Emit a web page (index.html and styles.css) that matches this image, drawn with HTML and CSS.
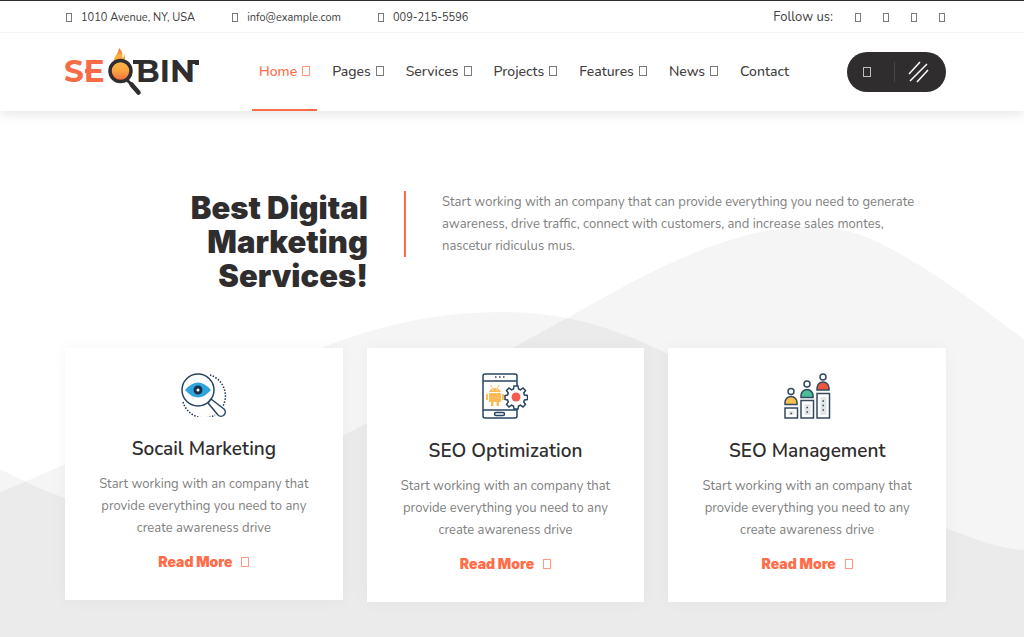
FILE: index.html
```
<!DOCTYPE html>
<html lang="en">
<head>
    <meta charset="UTF-8">
    <meta name="viewport" content="width=device-width, initial-scale=1.0">
    <title>Seobin</title>
    <link rel="stylesheet" href="styles.css">
</head>
<body>
    <header class="header">
        <div class="top-bar">
            <ul class="contact-list">
                <li><span class="glyph small"></span>1010 Avenue, NY, USA</li>
                <li><span class="glyph small"></span><a href="mailto:info@example.com">info@example.com</a></li>
                <li><span class="glyph small"></span><a href="tel:0092155596">009-215-5596</a></li>
            </ul>
            <div class="follow">
                <span class="follow-title">Follow us:</span>
                <a href="#" aria-label="Facebook"><span class="glyph small"></span></a>
                <a href="#" aria-label="Twitter"><span class="glyph small"></span></a>
                <a href="#" aria-label="Instagram"><span class="glyph small"></span></a>
                <a href="#" aria-label="LinkedIn"><span class="glyph small"></span></a>
            </div>
        </div>
        <div class="main-bar">
            <a href="#" class="logo" aria-label="Seobin">
                <svg width="136" height="50" viewBox="0 0 136 50">
                    <defs>
                        <linearGradient id="fire" x1="0" y1="0" x2="0" y2="1">
                            <stop offset="0" stop-color="#f0643c"/>
                            <stop offset="0.5" stop-color="#fbb040"/>
                            <stop offset="1" stop-color="#f9a13c"/>
                        </linearGradient>
                        <linearGradient id="lens" x1="0" y1="0" x2="0" y2="1">
                            <stop offset="0" stop-color="#fcb84a"/>
                            <stop offset="0.5" stop-color="#fba23f"/>
                            <stop offset="1" stop-color="#f2663f"/>
                        </linearGradient>
                    </defs>
                    <text class="logo-text orange" x="-1" y="35">SE</text>
                    <path d="M20 24h5" stroke="#f86b47" stroke-width="4"/>
                    <text class="logo-text" x="71" y="35">BIN</text>
                    <path d="M68 15h7M126 15h6v3" fill="none" stroke="#2f2d2e" stroke-width="4"/>
                    <path d="M49 15c-1-5 4-7 5-14 4 4 4 7 3 10 2-1 2-2 2-4 2 3 1 6 0 9z" fill="url(#fire)"/>
                    <circle cx="55.500" cy="24" r="10.500" fill="url(#lens)" stroke="#2f2d2e" stroke-width="3.500"/>
                    <path d="M62 33l4 4" stroke="#2f2d2e" stroke-width="3"/>
                    <path d="M66.500 37.500l7 8" stroke="#2f2d2e" stroke-width="4.500" stroke-linecap="round"/>
                </svg>
            </a>
            <nav class="nav">
                <a href="#" class="active">Home<span class="glyph"></span></a>
                <a href="#">Pages<span class="glyph"></span></a>
                <a href="#">Services<span class="glyph"></span></a>
                <a href="#">Projects<span class="glyph"></span></a>
                <a href="#">Features<span class="glyph"></span></a>
                <a href="#">News<span class="glyph"></span></a>
                <a href="#">Contact</a>
            </nav>
            <div class="tools">
                <button class="tool search" type="button" aria-label="Search"><span class="glyph"></span></button>
                <button class="tool menu" type="button" aria-label="Menu">
                    <svg width="22" height="22" viewBox="0 0 22 22">
                        <path d="M1 13L12 1M2 20L19 3M9 21L20 9" fill="none" stroke="#fff" stroke-width="1.500"/>
                    </svg>
                </button>
            </div>
        </div>
    </header>

    <main class="services">
        <svg class="hills" viewBox="0 0 1024 526" preserveAspectRatio="none" aria-hidden="true">
            <path d="M0 381C90 345 190 292 300 246C370 215 435 201 500 201C580 201 630 225 668 243C770 300 850 405 946 417C980 430 1002 438 1024 439V526H0Z"/>
            <path d="M0 358C40 378 80 398 125 398C240 395 380 300 512 237C600 191 700 123 790 117C845 112 870 126 904 145C950 171 985 200 1024 228V526H0Z"/>
        </svg>
        <section class="intro">
            <h1>Best Digital Marketing Services!</h1>
            <p>Start working with an company that can provide everything you need to generate awareness, drive traffic, connect with customers, and increase sales montes, nascetur ridiculus mus.</p>
        </section>
        <section class="cards">
            <article class="card">
                <svg width="46" height="44" viewBox="0 0 46 44" fill="none">
                    <path d="M29 2A22 22 0 0 1 42 33M2 29A22 22 0 0 0 34 42" stroke="#203a57" stroke-width="1.500" stroke-dasharray="1.500 1.500"/>
                    <circle cx="17" cy="17" r="16" stroke="#264461" stroke-width="1.500"/>
                    <path d="M4 17Q17 2 30 17Q17 32 4 17Z" fill="#2fa3dc"/>
                    <circle cx="17" cy="17" r="3" fill="#fff" stroke="#172f4b" stroke-width="3"/>
                    <path d="M27 30L30 26L43 36A4 4 0 0 1 37 42Z" fill="#fff" stroke="#264461" stroke-width="1.500" stroke-linejoin="round"/>
                </svg>
                <h2>Socail Marketing</h2>
                <p>Start working with an company that provide everything you need to any create awareness drive</p>
                <a href="#" class="more">Read More<span class="glyph"></span></a>
            </article>
            <article class="card">
                <svg width="46" height="46" viewBox="0 0 46 46" fill="none">
                    <rect x="1" y="1" width="34" height="44" rx="2" stroke="#264461" stroke-width="1.500"/>
                    <path d="M1 8h34M1 37h34" stroke="#264461" stroke-width="1.500"/>
                    <path d="M13 4h1.500M17 4h1.500M21 4h1.500" stroke="#264461" stroke-width="1.500"/>
                    <rect x="12.500" y="39.500" width="10" height="3" rx="1.500" stroke="#264461" stroke-width="1.500"/>
                    <path d="M7 19a6.500 6.500 0 0 1 12 0zM7 20h12v9h-2v4h-2.500v-4h-3v4H9v-4H7zM4 21h2v6H4zM20 21h2v6h-2z" fill="#fdbb58"/>
                    <path d="M9 12l1.500 3M17 12l-1.500 3" stroke="#fdbb58"/>
                    <path d="M10.500 17h1M14.500 17h1" stroke="#fff"/>
                    <path d="M32 13h4l.5 3 2 .8 2.500-1.800 2.500 2.500-1.800 2.500.8 2 3 .5v4l-3 .5-.8 2 1.800 2.500-2.500 2.500-2.500-1.800-2 .8-.5 3h-4l-.5-3-2-.8-2.500 1.800-2.500-2.500 1.800-2.500-.8-2-2.500-.5v-4l2.500-.5.8-2-1.800-2.500 2.500-2.500 2.500 1.800 2-.8z" fill="#fff" stroke="#264461" stroke-width="1.500"/>
                    <circle cx="34" cy="24" r="4.500" fill="#f35b50"/>
                </svg>
                <h2>SEO Optimization</h2>
                <p>Start working with an company that provide everything you need to any create awareness drive</p>
                <a href="#" class="more">Read More<span class="glyph"></span></a>
            </article>
            <article class="card">
                <svg width="47" height="46" viewBox="0 0 47 46" fill="#fff" stroke="#34495e" stroke-width="1.500">
                    <rect x="1" y="35" width="12.500" height="10"/>
                    <rect x="17" y="27.500" width="12.500" height="17.500"/>
                    <rect x="33" y="20.500" width="12.500" height="24.500"/>
                    <path d="M4.500 38h6v4h-6zM20.500 31h6v11h-6zM36.500 24h6v18h-6z" fill="#e1e6e9" stroke="none"/>
                    <path d="M6.500 40.500h1.500M22.500 34.500h1.500M22.500 39h1.500M38.500 28h1.500M38.500 32.500h1.500M38.500 37h1.500"/>
                    <path d="M1 31.500v-2a6 6 0 0 1 12 0v2z" fill="#fbc04f"/>
                    <path d="M17 24.500v-2a6 6 0 0 1 12 0v2z" fill="#4bbd98"/>
                    <path d="M33 17v-2a6 6 0 0 1 12 0v2z" fill="#f0563f"/>
                    <circle cx="7" cy="18.500" r="3"/>
                    <circle cx="23" cy="11" r="3"/>
                    <circle cx="39" cy="4" r="3"/>
                </svg>
                <h2>SEO Management</h2>
                <p>Start working with an company that provide everything you need to any create awareness drive</p>
                <a href="#" class="more">Read More<span class="glyph"></span></a>
            </article>
        </section>
    </main>
</body>
</html>
```
FILE: styles.css
```
* {
    box-sizing: border-box;
}
body {
    margin: 0;
    font-family: Nunito, Lato, sans-serif;
    font-size: 13px;
    color: #404040;
    background: #fff;
}
a {
    color: inherit;
    text-decoration: none;
}
.header {
    position: relative;
    z-index: 1;
    background: #fff;
    border-top: 1px solid #2f2d2e;
    box-shadow: 0 2px 12px rgba(0, 0, 0, 0.12);
}
.top-bar,
.main-bar {
    display: flex;
    align-items: center;
    justify-content: space-between;
    padding: 0 78px 0 65px;
}
.top-bar {
    height: 32px;
    padding-top: 1px;
    border-bottom: 1px solid #f5f5f5;
    font-size: 11px;
}
.contact-list {
    display: flex;
    gap: 36px;
    margin: 0;
    padding: 0;
    list-style: none;
}
.contact-list li {
    display: flex;
    align-items: center;
    gap: 9px;
}
.follow {
    display: flex;
    align-items: center;
    gap: 22px;
    padding-right: 1px;
    font-size: 13px;
}
.follow a {
    display: flex;
}
/* empty icon box */
.glyph {
    display: inline-block;
    width: 8px;
    height: 10px;
    border: 1px solid currentColor;
    opacity: 0.7;
}
.glyph.small {
    width: 6px;
    height: 9px;
}
.contact-list .glyph {
    margin-left: 1px;
}
.main-bar {
    height: 78px;
}
.logo {
    display: flex;
}
.logo-text {
    font-family: Montserrat, Inter, sans-serif;
    font-size: 31px;
    font-weight: 700;
    fill: #2f2d2e;
}
.logo-text.orange {
    fill: #f86b47;
}
.nav {
    display: flex;
    align-self: stretch;
    gap: 8px;
    font-size: 14px;
    font-weight: 500;
}
.nav a {
    display: flex;
    align-items: center;
    gap: 5px;
    padding: 0 7px;
    border-bottom: 2px solid transparent;
}
.nav .active {
    color: #ff6c47;
    border-color: #ff6c47;
}
.tools {
    display: flex;
    align-items: center;
    width: 99px;
    height: 40px;
    padding-right: 3px;
    border-radius: 20px;
    background: #2f2d2e;
}
.tool {
    display: flex;
    flex: 1;
    align-items: center;
    justify-content: center;
    height: 20px;
    padding: 0;
    border: 0;
    background: none;
    color: #fff;
}
.tool.search {
    flex: 0 0 47px;
    padding-right: 6px;
}
.tool.menu {
    border-left: 1px solid #484647;
}
.services {
    position: relative;
    padding: 80px 78px 35px 65px;
}
.hills {
    position: absolute;
    inset: 0;
    width: 100%;
    height: 100%;
    fill: rgba(0, 0, 0, 0.04);
}
.intro {
    position: relative;
    display: flex;
    align-items: flex-start;
    height: 157px;
}
.intro h1 {
    flex: 0 0 303px;
    margin: 0;
    padding-left: 90px;
    font-family: "Arial Black", Inter, sans-serif;
    font-size: 31px;
    font-weight: 900;
    line-height: 34px;
    text-align: right;
    color: #2f2d2e;
}
.intro p {
    margin: 0 0 0 36px;
    padding: 0 24px 0 36px;
    border-left: 2px solid #ff6c47;
}
p {
    font-size: 13px;
    line-height: 22px;
    color: #7f7f7f;
}
.cards {
    position: relative;
    display: grid;
    grid-template-columns: repeat(3, 1fr);
    align-items: start;
    gap: 24px;
}
.card {
    display: flex;
    flex-direction: column;
    align-items: center;
    padding: 25px 32px 27px;
    background: #fff;
    box-shadow: 0 0 16px rgba(0, 0, 0, 0.04);
    text-align: center;
}
.card h2 {
    margin: 18px 0 10px;
    font-size: 19px;
    font-weight: 600;
    line-height: 28px;
    color: #2f2d2e;
}
.card p {
    margin: 0 0 12px;
}
.more {
    display: flex;
    align-items: center;
    gap: 9px;
    font-family: "Arial Black", Inter, sans-serif;
    font-size: 14px;
    font-weight: 900;
    line-height: 22px;
    color: #ff6c47;
}
```
